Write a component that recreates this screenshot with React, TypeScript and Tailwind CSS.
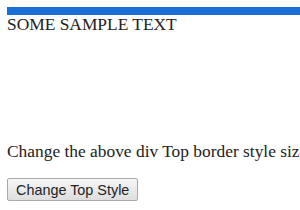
export default function App() {
  return (
    <div className="w-[300px] h-[210px] overflow-hidden bg-white pl-[7px] pt-[7px] font-['Liberation_Serif',serif] text-[17.4px] leading-[19px] text-[#222]">
      <div className="w-[400px] h-[117px] border-t-[8px] border-[#1a6ed6]">
        <div>SOME SAMPLE TEXT</div>
      </div>
      <p className="mt-[18px] whitespace-nowrap">Change the above div Top border style size and color</p>
      <button className="mt-[17px] h-[23px] px-[8px] rounded-[2px] border border-[#a9a9a9] bg-gradient-to-b from-[#f6f6f6] to-[#dedede] font-['Liberation_Sans',sans-serif] text-[14.4px] leading-[18px] text-[#222]">
        Change Top Style
      </button>
    </div>
  );
}
